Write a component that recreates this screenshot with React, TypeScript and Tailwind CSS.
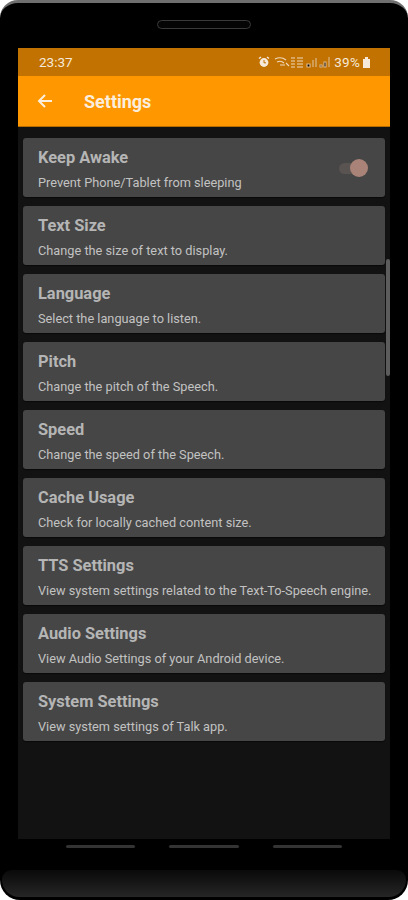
import React from "react";

const rows = [
  ["Keep Awake", "Prevent Phone/Tablet from sleeping"],
  ["Text Size", "Change the size of text to display."],
  ["Language", "Select the language to listen."],
  ["Pitch", "Change the pitch of the Speech."],
  ["Speed", "Change the speed of the Speech."],
  ["Cache Usage", "Check for locally cached content size."],
  ["TTS Settings", "View system settings related to the Text-To-Speech engine."],
  ["Audio Settings", "View Audio Settings of your Android device."],
  ["System Settings", "View system settings of Talk app."],
];

function StatusIcons() {
  return (
    <svg width="73" height="12" viewBox="0 0 73 12" className="shrink-0">
      <circle cx="6" cy="6.5" r="4.4" fill="#f6e9da" />
      <path d="M1 2.5 3 1M11 2.5 9 1" stroke="#f6e9da" strokeWidth="1.4" />
      <path d="M6 4v2.800h2" stroke="#c06f00" strokeWidth="1" fill="none" />
      <path d="M17 3q6-3 11 1M19 6q4-2 7 1M22 9h5M28 7l3 3" stroke="#f0d9bd" strokeWidth="1.1" fill="none" />
      <path d="M33 2h4M33 5h4M33 8h4M33 11h4M39 2h6M39 5h6M39 8h6M39 11h6" stroke="#f0d9bd" strokeWidth="1.200" />
      <path d="M49 11h3V8h-3zM55 11V4M58 11V2" stroke="#dcb98c" strokeWidth="1.200" />
      <path d="M62 11h2V9h-2zM66 11h2V6h-2zM71 11V1" stroke="#dcb98c" strokeWidth="1.100" />
    </svg>
  );
}

function Row({ title, sub, toggle }: { title: string; sub: string; toggle?: boolean }) {
  return (
    <div className="h-[59px] shrink-0 rounded-[3px] bg-[#464646] pl-[15px] pr-[17px] flex items-center justify-between shadow-[0_1px_1px_rgba(0,0,0,0.5)]">
      <div className="flex flex-col pt-[3px]">
        <span className="text-[16.4px] leading-[20px] font-bold text-[#b5b5b5]">{title}</span>
        <span className="text-[12.75px] leading-[16px] mt-[7px] text-[#c2c2c2] whitespace-nowrap">{sub}</span>
      </div>
      {toggle && (
        <div className="relative w-[29px] h-[18px] shrink-0">
          <div className="absolute left-0 top-[4px] w-[26px] h-[11px] rounded-full bg-[#595351]" />
          <div className="absolute right-0 top-[0px] w-[18px] h-[18px] rounded-full bg-[#a98377]" />
        </div>
      )}
    </div>
  );
}

export default function App() {
  return (
    <div className="w-[408px] h-[900px] bg-white overflow-hidden font-['Roboto',sans-serif]">
      <div className="h-[900px] box-border border-t-[3px] border-[#6f6f6f] bg-black rounded-t-[18px] rounded-b-[20px] flex flex-col items-center overflow-hidden">
        <div className="h-[45px] shrink-0 w-full flex justify-center items-start pt-[17px]">
          <div className="w-[94px] h-[9px] rounded-full border border-[#3a3a3a] bg-[#050505]" />
        </div>
        <div className="w-[372px] h-[791px] shrink-0 bg-[#121212] flex flex-col relative">
          <div className="h-[28px] shrink-0 bg-[#c27200] flex items-center justify-between pl-[21px] pr-[20px]">
            <span className="text-[13.5px] text-[#f6e9da]">23:37</span>
            <div className="flex items-center gap-[3px]">
              <StatusIcons />
              <span className="text-[13.5px] tracking-[0.2px] text-[#f6e9da]">39%</span>
              <svg width="7" height="11" viewBox="0 0 7 11">
                <path d="M2 0h3v2h2v9H0V2h2z" fill="#f6e9da" />
              </svg>
            </div>
          </div>
          <div className="h-[51px] shrink-0 bg-[#ff9800] flex items-center pl-[19px] gap-[31px] border-b border-[#b56c00]">
            <svg width="16" height="16" viewBox="0 0 16 16" fill="none" stroke="#fbeedd" strokeWidth="2">
              <path d="M15 8H2M8 2 2 8l6 6" />
            </svg>
            <span className="text-[18px] font-bold text-[#fbeedd] pt-[1px]">Settings</span>
          </div>
          <div className="flex flex-col gap-[9px] pt-[11px] pl-[5px] pr-[5px]">
            {rows.map(([t, s], i) => (
              <Row key={t} title={t} sub={s} toggle={i === 0} />
            ))}
          </div>
          <div className="absolute right-0 top-[211px] w-[4px] h-[117px] rounded-full bg-[#5c5c5c]" />
        </div>
        <div className="w-full flex justify-center gap-[34px] pt-[6px] shrink-0">
          <div className="w-[69px] h-[3px] rounded-full bg-[#333333]" />
          <div className="w-[70px] h-[3px] rounded-full bg-[#333333]" />
          <div className="w-[69px] h-[3px] rounded-full bg-[#333333]" />
        </div>
        <div className="w-full shrink-0 px-[2px] mt-[22px]">
          <div className="h-[27px] rounded-t-[10px] rounded-b-[18px] bg-gradient-to-b from-[#0a0a0a] to-[#262626]" />
        </div>
      </div>
    </div>
  );
}
